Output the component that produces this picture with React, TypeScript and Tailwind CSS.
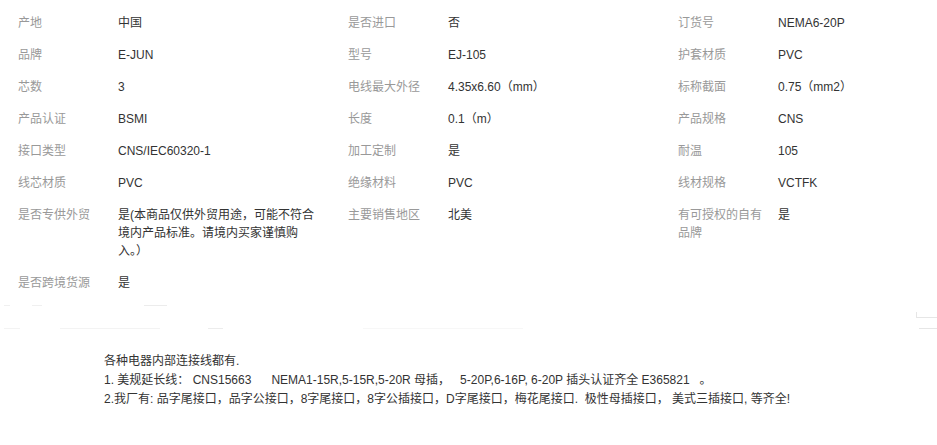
const attrs: [string, string][] = [
  ['产地', '中国'],
  ['是否进口', '否'],
  ['订货号', 'NEMA6-20P'],
  ['品牌', 'E-JUN'],
  ['型号', 'EJ-105'],
  ['护套材质', 'PVC'],
  ['芯数', '3'],
  ['电线最大外径', '4.35x6.60（mm）'],
  ['标称截面', '0.75（mm2）'],
  ['产品认证', 'BSMI'],
  ['长度', '0.1（m）'],
  ['产品规格', 'CNS'],
  ['接口类型', 'CNS/IEC60320-1'],
  ['加工定制', '是'],
  ['耐温', '105'],
  ['线芯材质', 'PVC'],
  ['绝缘材料', 'PVC'],
  ['线材规格', 'VCTFK'],
  ['是否专供外贸', '是(本商品仅供外贸用途，可能不符合境内产品标准。请境内买家谨慎购入。）'],
  ['主要销售地区', '北美'],
  ['有可授权的自有品牌', '是'],
  ['是否跨境货源', '是'],
]

export default function App() {
  return (
    <div className="w-[937px] h-[445px] bg-white text-[12px] leading-[18px] font-['Liberation_Sans','Noto_Sans_CJK_SC',sans-serif] overflow-hidden">
      <div className="grid grid-cols-[330px_330px_277px] pt-[7px]">
        {attrs.map(([label, value]) => (
          <div key={label} className="flex py-[7px] pl-[18px]">
            <div className="w-[100px] shrink-0 pr-[12px] text-[#999]">{label}</div>
            <div className="w-[200px] text-[#333]">{value}</div>
          </div>
        ))}
      </div>

      <div className="h-[47px]">
        <div className="flex mt-[6px] h-px">
          <div className="ml-[4px] w-[6px] bg-[#f0f0f0]" />
          <div className="ml-[22px] w-[10px] bg-[#f0f0f0]" />
          <div className="ml-[102px] w-[23px] bg-[#ececec]" />
        </div>
        <div className="flex mt-[6px] justify-end">
          <div className="w-[21px] h-[6px] border-l border-b border-[#e6e6e6]" />
        </div>
        <div className="flex mt-[10px] h-px">
          <div className="ml-[4px] w-[16px] bg-[#f3f3f3]" />
          <div className="ml-[40px] w-[100px] bg-[#f3f3f3]" />
          <div className="ml-[48px] w-[15px] bg-[#ececec]" />
          <div className="ml-[140px] w-[160px] bg-[#f7f7f7]" />
          <div className="ml-auto w-[18px] bg-[#e6e6e6]" />
        </div>
      </div>

      <div className="pl-[104px] text-[#333] leading-[19px] whitespace-pre">
        <div>各种电器内部连接线都有.</div>
        <div>1. 美规延长线： CNS15663      NEMA1-15R,5-15R,5-20R 母插，   5-20P,6-16P, 6-20P 插头认证齐全 E365821   。</div>
        <div>2.我厂有: 品字尾接口，品字公接口，8字尾接口，8字公插接口，D字尾接口，梅花尾接口.  极性母插接口， 美式三插接口, 等齐全!</div>
      </div>
    </div>
  )
}
